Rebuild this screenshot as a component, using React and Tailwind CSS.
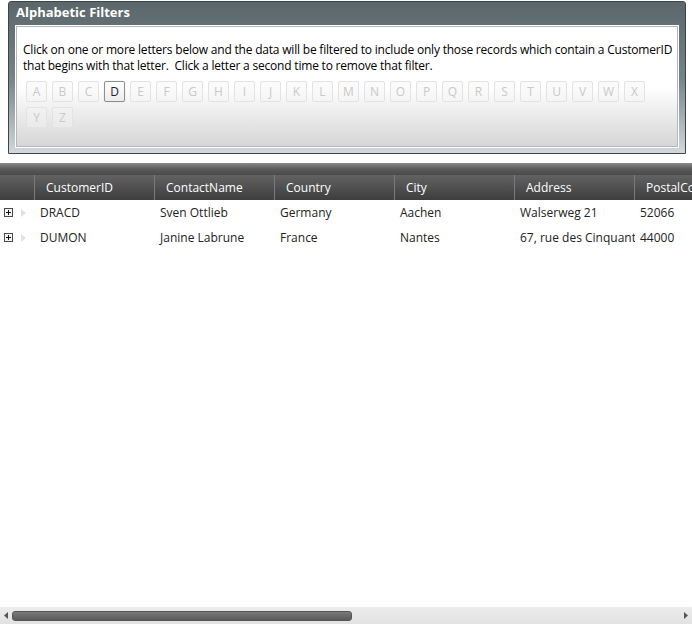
import React, { useState } from 'react';

const letters = 'ABCDEFGHIJKLMNOPQRSTUVWXYZ'.split('');

const columns = ['CustomerID', 'ContactName', 'Country', 'City', 'Address', 'PostalCode'];

const rows = [
  ['DRACD', 'Sven Ottlieb', 'Germany', 'Aachen', 'Walserweg 21', '52066'],
  ['DUMON', 'Janine Labrune', 'France', 'Nantes', '67, rue des Cinquante Otages', '44000'],
];

const LetterButton = ({ letter, active, onClick }) => (
  <button
    onClick={onClick}
    className={
      active
        ? 'w-[21px] h-[21px] flex items-center justify-center rounded-[2px] border border-[#8e8e8e] bg-gradient-to-b from-white to-[#ececec] text-[12px] text-[#222] shadow-[0_0_1px_#bbb]'
        : 'w-[21px] h-[21px] flex items-center justify-center rounded-[2px] border border-[#e3e3e3] bg-[#f6f6f6]/40 text-[12px] text-[#c9c9c9]'
    }
  >
    {letter}
  </button>
);

const Expander = () => (
  <div className="flex items-center gap-[8px] pl-[4px]">
    <svg width="9" height="9" viewBox="0 0 9 9">
      <rect x="0.5" y="0.5" width="8" height="8" fill="#f4f4f4" stroke="#4a4a4a" />
      <path d="M2 4.5h5M4.5 2v5" stroke="#111" strokeWidth="1" />
    </svg>
    <svg width="5" height="8" viewBox="0 0 5 8">
      <path d="M0 0l5 4-5 4z" fill="#e2e2e2" />
    </svg>
  </div>
);

export default function App() {
  const [selected, setSelected] = useState(['D']);

  const toggle = (l) =>
    setSelected((s) => (s.includes(l) ? s.filter((x) => x !== l) : [...s, l]));

  return (
    <div
      className="w-[692px] h-[625px] bg-white flex flex-col overflow-hidden"
      style={{ fontFamily: '"Open Sans", "Noto Sans", sans-serif' }}
    >
      {/* Filter panel */}
      <div className="pt-[1px] pl-[8px] pr-[6px]">
        <div className="h-[153px] border border-[#3b4447] rounded-t-[3px] bg-gradient-to-b from-[#5b676a] via-[#75838a] to-[#d2d8db] flex flex-col">
          <div className="h-[23px] pl-[7px] text-white font-bold text-[13px] leading-[21px]">
            Alphabetic Filters
          </div>
          <div className="mx-[6px] h-[123px] border border-white">
            <div className="h-full border border-[#b4b8ba] bg-gradient-to-b from-white via-white to-[#d6d6d6] pl-[6px] pt-[15px]">
              <p className="text-[12px] leading-[16px] text-black tracking-[-0.2px] w-[660px]">
                Click on one or more letters below and the data will be filtered to include only those records which contain a CustomerID that begins with that letter.&nbsp; Click a letter a second time to remove that filter.
              </p>
              <div className="mt-[7px] ml-[3px] w-[622px] flex flex-wrap gap-[5px]">
                {letters.map((l) => (
                  <LetterButton key={l} letter={l} active={selected.includes(l)} onClick={() => toggle(l)} />
                ))}
              </div>
            </div>
          </div>
        </div>
      </div>

      {/* Grid */}
      <div className="mt-[9px] flex-1 flex flex-col">
        <div className="h-[12px] bg-gradient-to-b from-[#8a8a8a] via-[#5a5a5a] to-[#4a4a4a]" />
        <div className="h-[25px] flex bg-gradient-to-b from-[#626262] to-[#3e3e3e] text-white text-[12px]">
          <div className="w-[35px] shrink-0 border-r border-[#7a7a7a]" />
          {columns.map((c) => (
            <div key={c} className="w-[120px] shrink-0 border-r border-[#7a7a7a] pl-[11px] flex items-center overflow-hidden whitespace-nowrap">
              {c}
            </div>
          ))}
        </div>
        <div className="flex-1">
          {rows.map((r) => (
            <div key={r[0]} className="h-[25px] flex items-center text-[12px] text-[#222]">
              <div className="w-[35px] shrink-0">
                <Expander />
              </div>
              {r.map((v, i) => (
                <div key={i} className="w-[120px] shrink-0 pl-[5px] overflow-hidden whitespace-nowrap">
                  {v}
                </div>
              ))}
            </div>
          ))}
        </div>
        {/* Horizontal scrollbar */}
        <div className="h-[17px] mb-[1px] bg-gradient-to-b from-[#ececec] to-[#e2e2e2] flex items-center px-[4px]">
          <svg width="4" height="7" viewBox="0 0 4 7">
            <path d="M4 0L0 3.5 4 7z" fill="#555" />
          </svg>
          <div className="ml-[4px] w-[340px] h-[10px] rounded-[3px] bg-gradient-to-b from-[#7a7a7a] to-[#5a5a5a] border border-[#555]" />
          <div className="flex-1" />
          <svg width="4" height="7" viewBox="0 0 4 7">
            <path d="M0 0l4 3.5L0 7z" fill="#555" />
          </svg>
        </div>
      </div>
    </div>
  );
}
